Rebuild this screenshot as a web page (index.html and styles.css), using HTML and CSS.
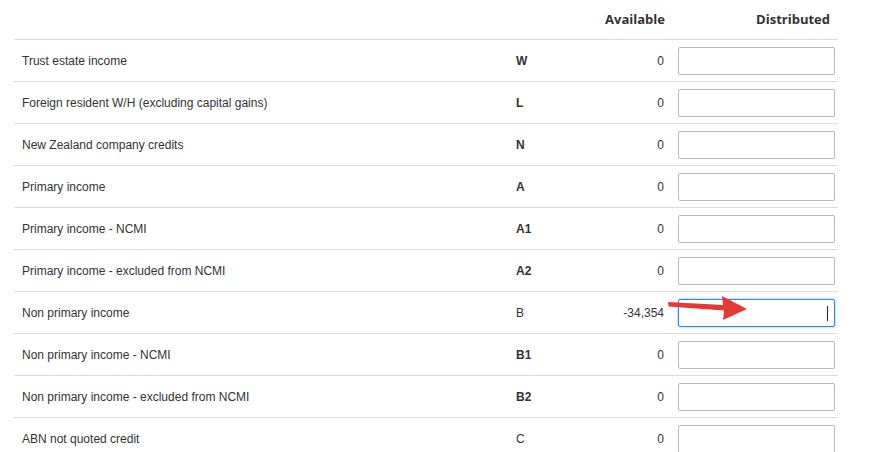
FILE: index.html
```html
<!DOCTYPE html>
<html>
<head>
<meta charset="utf-8">
<link rel="stylesheet" href="styles.css">
</head>
<body>
<div class="table">
  <div class="head">
    <div></div>
    <div></div>
    <div class="h-avail">Available</div>
    <div></div>
    <div class="h-dist">Distributed</div>
  </div>
  <div class="row"><div class="label">Trust estate income</div><div class="code b">W</div><div class="avail">0</div><div></div><div class="field"><span class="box"></span></div></div>
  <div class="row"><div class="label">Foreign resident W/H (excluding capital gains)</div><div class="code b">L</div><div class="avail">0</div><div></div><div class="field"><span class="box"></span></div></div>
  <div class="row"><div class="label">New Zealand company credits</div><div class="code b">N</div><div class="avail">0</div><div></div><div class="field"><span class="box"></span></div></div>
  <div class="row"><div class="label">Primary income</div><div class="code b">A</div><div class="avail">0</div><div></div><div class="field"><span class="box"></span></div></div>
  <div class="row"><div class="label">Primary income - NCMI</div><div class="code b">A1</div><div class="avail">0</div><div></div><div class="field"><span class="box"></span></div></div>
  <div class="row"><div class="label">Primary income - excluded from NCMI</div><div class="code b">A2</div><div class="avail">0</div><div></div><div class="field"><span class="box"></span></div></div>
  <div class="row"><div class="label">Non primary income</div><div class="code">B</div><div class="avail">-34,354</div><div></div><div class="field"><span class="box focus"><span class="caret"></span></span>
    <svg class="arrow" width="90" height="30" viewBox="0 0 90 30"><path d="M1 6 L1.5 10.5 L57 14.5 L56 24 L80 13 L55 0 L56 9 Z" fill="#e53935"/></svg>
  </div></div>
  <div class="row"><div class="label">Non primary income - NCMI</div><div class="code b">B1</div><div class="avail">0</div><div></div><div class="field"><span class="box"></span></div></div>
  <div class="row"><div class="label">Non primary income - excluded from NCMI</div><div class="code b">B2</div><div class="avail">0</div><div></div><div class="field"><span class="box"></span></div></div>
  <div class="row"><div class="label">ABN not quoted credit</div><div class="code">C</div><div class="avail">0</div><div></div><div class="field"><span class="box"></span></div></div>
</div>
</body>
</html>
```
FILE: styles.css
```css
html, body {
  margin: 0;
  padding: 0;
  background: #fff;
}
body {
  font-family: "Liberation Sans", Arial, sans-serif;
  font-size: 12px;
  color: #333;
  overflow: hidden;
}
.table {
  margin-left: 14px;
  width: 824px;
}
.head, .row {
  display: grid;
  grid-template-columns: 502px 80px 68px 14px 157px 3px;
  align-items: center;
}
.head {
  height: 39px;
  font-family: "Open Sans", sans-serif;
  font-weight: bold;
  font-size: 13px;
  color: #333;
}
.h-avail {
  text-align: right;
  margin-right: -1px;
  padding-bottom: 1px;
}
.h-dist {
  text-align: right;
  padding-right: 5px;
  padding-bottom: 1px;
}
.row {
  height: 41px;
  border-top: 1px solid #dcdcdc;
}
.label {
  padding-left: 8px;
}
.code.b {
  font-weight: bold;
}
.avail {
  text-align: right;
}
.field {
  position: relative;
  height: 28px;
}
.box {
  display: block;
  box-sizing: border-box;
  height: 28px;
  border: 1px solid #b9b9b9;
  border-radius: 2px;
  background: #fff;
  position: relative;
}
.box.focus {
  border-color: #2a8ce8;
  box-shadow: 0 0 3px rgba(42, 140, 232, 0.6);
}
.caret {
  position: absolute;
  right: 6px;
  top: 6px;
  width: 1px;
  height: 15px;
  background: #222;
}
.arrow {
  position: absolute;
  left: -11px;
  top: -3px;
}
```
